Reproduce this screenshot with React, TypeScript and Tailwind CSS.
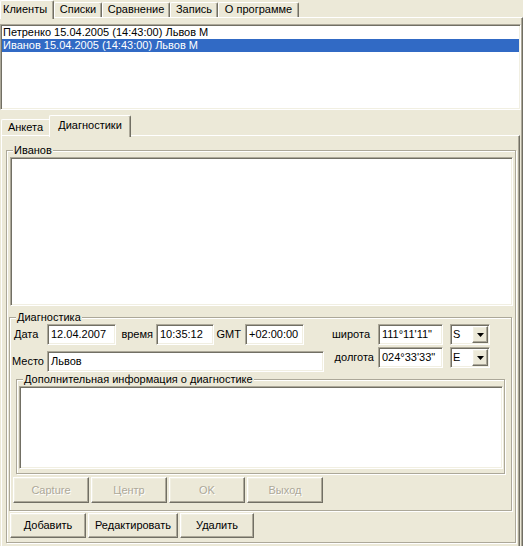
import React from "react";

const sunken =
  "border border-t-[#ACA899] border-l-[#ACA899] border-b-white border-r-white shadow-[inset_1px_1px_0_#716F64,inset_-1px_-1px_0_#F1EFE2]";
const raised =
  "border border-t-white border-l-white border-b-[#716F64] border-r-[#716F64] shadow-[inset_-1px_-1px_0_#ACA899,inset_1px_1px_0_#F1EFE2]";
const etched =
  "relative border border-[#ACA899] shadow-[inset_1px_1px_0_#ffffff,1px_1px_0_#ffffff]";

function Legend({ children }: { children: React.ReactNode }) {
  return (
    <span className="absolute left-[6px] -top-[7px] bg-[#ECE9D8] px-[1px] leading-[13px] whitespace-nowrap">
      {children}
    </span>
  );
}

function Select({ value }: { value: string }) {
  return (
    <div className={`${sunken} w-[40px] h-[21px] p-[1px] flex items-center bg-white`}>
      <span className="pl-[1px] flex-1">{value}</span>
      <div className={`${raised} bg-[#ECE9D8] w-[16px] h-[17px] flex items-center justify-center`}>
        <svg width="7" height="4" viewBox="0 0 7 4">
          <path d="M0 0h7L3.5 4z" fill="#000" />
        </svg>
      </div>
    </div>
  );
}

function Btn({ label, w, disabled }: { label: string; w: string; disabled?: boolean }) {
  return (
    <div
      className={`${raised} ${w} h-full flex items-center justify-center ${
        disabled ? "text-[#ACA899] [text-shadow:1px_1px_0_#ffffff]" : ""
      }`}
    >
      {label}
    </div>
  );
}

export default function App() {
  return (
    <div className="w-[523px] h-[546px] overflow-hidden bg-[#ECE9D8] text-[11px] leading-[13px] text-black [font-family:'Liberation_Sans',Arial,sans-serif] flex flex-col">
      {/* top tabs */}
      <div className="h-[17px] shrink-0 flex items-start relative z-10">
        <div className="w-[54px] h-[19px] bg-[#ECE9D8] border-l border-t border-r border-l-white border-t-white border-r-[#716F64] shadow-[inset_-1px_0_0_#ACA899] rounded-t-[2px] pt-[2px] pl-[2px] text-left">
          Клиенты
        </div>
        <div className="w-[48px] mt-[2px] h-[15px] border-l border-t border-r border-l-white border-t-white border-r-[#716F64] shadow-[inset_-1px_0_0_#ACA899] rounded-t-[2px] text-center">
          Списки
        </div>
        <div className="w-[68px] mt-[2px] h-[15px] border-l border-t border-r border-l-white border-t-white border-r-[#716F64] shadow-[inset_-1px_0_0_#ACA899] rounded-t-[2px] text-center">
          Сравнение
        </div>
        <div className="w-[48px] mt-[2px] h-[15px] border-l border-t border-r border-l-white border-t-white border-r-[#716F64] shadow-[inset_-1px_0_0_#ACA899] rounded-t-[2px] text-center">
          Запись
        </div>
        <div className="w-[81px] mt-[2px] h-[15px] border-l border-t border-r border-l-white border-t-white border-r-[#716F64] shadow-[inset_-1px_0_0_#ACA899] rounded-t-[2px] text-center">
          О программе
        </div>
      </div>

      {/* outer page */}
      <div className="flex-1 min-h-0 border-t border-r border-t-white border-r-[#716F64] shadow-[inset_-1px_0_0_#ACA899] pt-[6px] flex flex-col">
        {/* listbox */}
        <div className={`${sunken} w-[521px] h-[86px] bg-white p-[1px] shrink-0`}>
          <div className="h-[13px] pl-[1px] whitespace-nowrap">Петренко 15.04.2005 (14:43:00) Львов М</div>
          <div className="h-[13px] pl-[1px] whitespace-nowrap bg-[#316AC5] text-white">
            Иванов 15.04.2005 (14:43:00) Львов М
          </div>
        </div>

        {/* inner tab control */}
        <div className="mt-[5px] ml-[1px] w-[519px] flex flex-col flex-1 min-h-0">
          <div className="h-[20px] shrink-0 flex items-start relative z-10">
            <div className="w-[48px] mt-[4px] h-[16px] border-l border-t border-l-white border-t-white rounded-tl-[2px] text-center pt-[1px]">
              Анкета
            </div>
            <div className="w-[82px] h-[22px] bg-[#ECE9D8] border-l border-t border-r border-l-white border-t-white border-r-[#716F64] shadow-[inset_-1px_0_0_#ACA899] rounded-t-[2px] text-center pt-[3px]">
              Диагностики
            </div>
          </div>

          <div className="h-[420px] shrink-0 border-l border-t border-r border-b border-l-white border-t-white border-r-[#716F64] border-b-[#716F64] shadow-[inset_-1px_-1px_0_#ACA899] pt-[14px] pl-[4px]">
            {/* group Иванов */}
            <div className={`${etched} w-[510px] h-[393px] flex flex-col`}>
              <Legend>Иванов</Legend>
              <div className={`${sunken} bg-white ml-[3px] mt-[6px] w-[503px] h-[149px] shrink-0`} />

              {/* group Диагностика */}
              <div className={`${etched} ml-[2px] mt-[11px] w-[503px] h-[194px] shrink-0 flex flex-col`}>
                <Legend>Диагностика</Legend>
                {/* row 1 */}
                <div className="mt-[6px] h-[21px] flex items-center shrink-0">
                  <div className="w-[37px] pl-[4px]">Дата</div>
                  <div className={`${sunken} bg-white w-[69px] h-[21px] pl-[3px] flex items-center`}>12.04.2007</div>
                  <div className="w-[40px] pr-[3px] text-right">время</div>
                  <div className={`${sunken} bg-white w-[58px] h-[21px] pl-[3px] flex items-center`}>10:35:12</div>
                  <div className="w-[31px] pr-[4px] text-right">GMT</div>
                  <div className={`${sunken} bg-white w-[59px] h-[21px] pl-[3px] flex items-center`}>+02:00:00</div>
                  <div className="w-[74px] pr-[8px] text-right">широта</div>
                  <div className={`${sunken} bg-white w-[65px] h-[21px] pl-[3px] flex items-center`}>111°11'11"</div>
                  <div className="w-[7px]" />
                  <Select value="S" />
                </div>
                {/* row 2 */}
                <div className="mt-[2px] h-[25px] flex items-start shrink-0">
                  <div className="w-[37px] pl-[2px] mt-[8px]">Место</div>
                  <div className={`${sunken} bg-white w-[277px] h-[21px] mt-[4px] pl-[3px] flex items-center`}>Львов</div>
                  <div className="w-[54px] pr-[4px] text-right mt-[4px]">долгота</div>
                  <div className={`${sunken} bg-white w-[65px] h-[21px] pl-[3px] flex items-center`}>024°33'33"</div>
                  <div className="w-[7px]" />
                  <Select value="E" />
                </div>

                {/* group доп. информация */}
                <div className={`${etched} ml-[6px] mt-[7px] w-[489px] h-[95px] shrink-0`}>
                  <Legend>Дополнительная информация о диагностике</Legend>
                  <div className={`${sunken} bg-white ml-[2px] mt-[6px] w-[484px] h-[83px]`} />
                </div>

                {/* disabled buttons */}
                <div className="ml-[3px] mt-[3px] h-[26px] flex gap-[2px] shrink-0">
                  <Btn label="Capture" w="w-[76px]" disabled />
                  <Btn label="Центр" w="w-[76px]" disabled />
                  <Btn label="OK" w="w-[76px]" disabled />
                  <Btn label="Выход" w="w-[76px]" disabled />
                </div>
              </div>

              {/* bottom buttons */}
              <div className="ml-[3px] mt-[2px] h-[25px] flex gap-[2px] shrink-0">
                <Btn label="Добавить" w="w-[76px]" />
                <Btn label="Редактировать" w="w-[90px]" />
                <Btn label="Удалить" w="w-[74px]" />
              </div>
            </div>
          </div>
        </div>
      </div>
    </div>
  );
}
